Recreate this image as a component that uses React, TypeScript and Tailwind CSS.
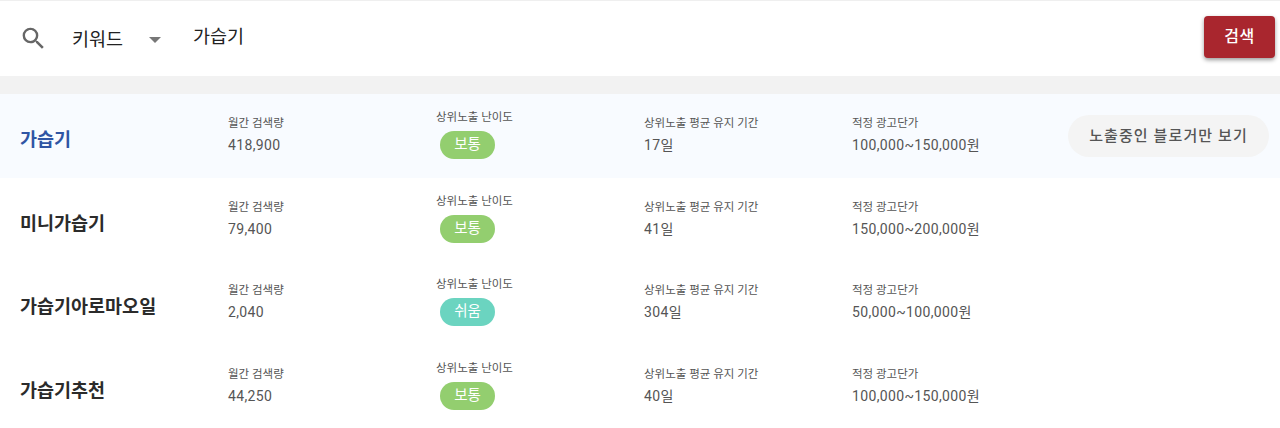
const rows = [
  { name: "가습기", volume: "418,900", level: "보통", period: "17일", price: "100,000~150,000원", active: true },
  { name: "미니가습기", volume: "79,400", level: "보통", period: "41일", price: "150,000~200,000원" },
  { name: "가습기아로마오일", volume: "2,040", level: "쉬움", period: "304일", price: "50,000~100,000원" },
  { name: "가습기추천", volume: "44,250", level: "보통", period: "40일", price: "100,000~150,000원" },
];

function Stat({ label, value, width }: { label: string; value: string; width: string }) {
  return (
    <div className={`mb-[1px] ${width}`}>
      <p className="text-[11.5px] leading-[16px] text-[#555]">{label}</p>
      <p className="mt-[4px] text-[14px] leading-[20px] tracking-[0.35px] text-[#555]">{value}</p>
    </div>
  );
}

export default function App() {
  return (
    <div className="h-[428px] w-[1280px] overflow-hidden border-t border-[#efefef] bg-white font-['Roboto','Noto_Sans_CJK_KR',sans-serif]">
      {/* Search bar */}
      <div className="flex h-[75px] items-center pl-[19px] pr-[5px]">
        <svg viewBox="0 0 24 24" className="h-[29px] w-[29px] fill-[#666]">
          <path d="M15.5 14h-.79l-.28-.27A6.471 6.471 0 0 0 16 9.5 6.5 6.5 0 1 0 9.5 16c1.61 0 3.09-.59 4.23-1.57l.27.28v.79l5 4.99L20.49 19l-4.99-5zm-6 0C7.01 14 5 11.99 5 9.5S7.01 5 9.5 5 14 7.01 14 9.5 11.99 14 9.5 14z" />
        </svg>
        <span className="ml-[24px] mt-[5px] w-[77px] text-[18.5px] text-[#222]">키워드</span>
        <span className="mt-[3px] h-0 w-0 border-x-[6px] border-t-[6px] border-x-transparent border-t-[#777]" />
        <span className="ml-[32px] mb-[1px] flex-1 text-[18.5px] text-[#222]">가습기</span>
        <button className="mb-[3px] h-[42px] w-[71px] rounded-[4px] bg-[#a9262e] text-[16px] font-medium tracking-[0.5px] text-white shadow-[0_2px_4px_rgba(0,0,0,0.4)]">
          검색
        </button>
      </div>
      <div className="h-[18px] bg-[#f2f2f2]" />

      {/* Keyword rows */}
      {rows.map((row) => (
        <div
          key={row.name}
          className={`flex h-[83.5px] items-center pl-[20px] ${row.active ? "bg-[#f8fbff]" : "bg-white"}`}
        >
          <div className={`mt-[11px] w-[208px] text-[18.5px] font-bold ${row.active ? "text-[#2f55a4]" : "text-[#2b2b2b]"}`}>
            {row.name}
          </div>
          <Stat label="월간 검색량" value={row.volume} width="w-[208px]" />
          <div className="mb-[3px] w-[208px]">
            <p className="text-[11.5px] leading-[16px] text-[#555]">상위노출 난이도</p>
            <span
              className={`ml-[4px] mt-[6px] flex h-[28px] w-[55px] items-center justify-center rounded-full text-[14.5px] text-white ${row.level === "쉬움" ? "bg-[#6bd4c0]" : "bg-[#93ce6f]"}`}
            >
              {row.level}
            </span>
          </div>
          <Stat label="상위노출 평균 유지 기간" value={row.period} width="w-[208px]" />
          <Stat label="적정 광고단가" value={row.price} width="w-[216px]" />
          {row.active && (
            <button className="h-[42px] w-[201px] rounded-full bg-[#f4f4f4] text-[15px] font-medium tracking-[1.1px] text-[#555]">
              노출중인 블로거만 보기
            </button>
          )}
        </div>
      ))}
    </div>
  );
}
